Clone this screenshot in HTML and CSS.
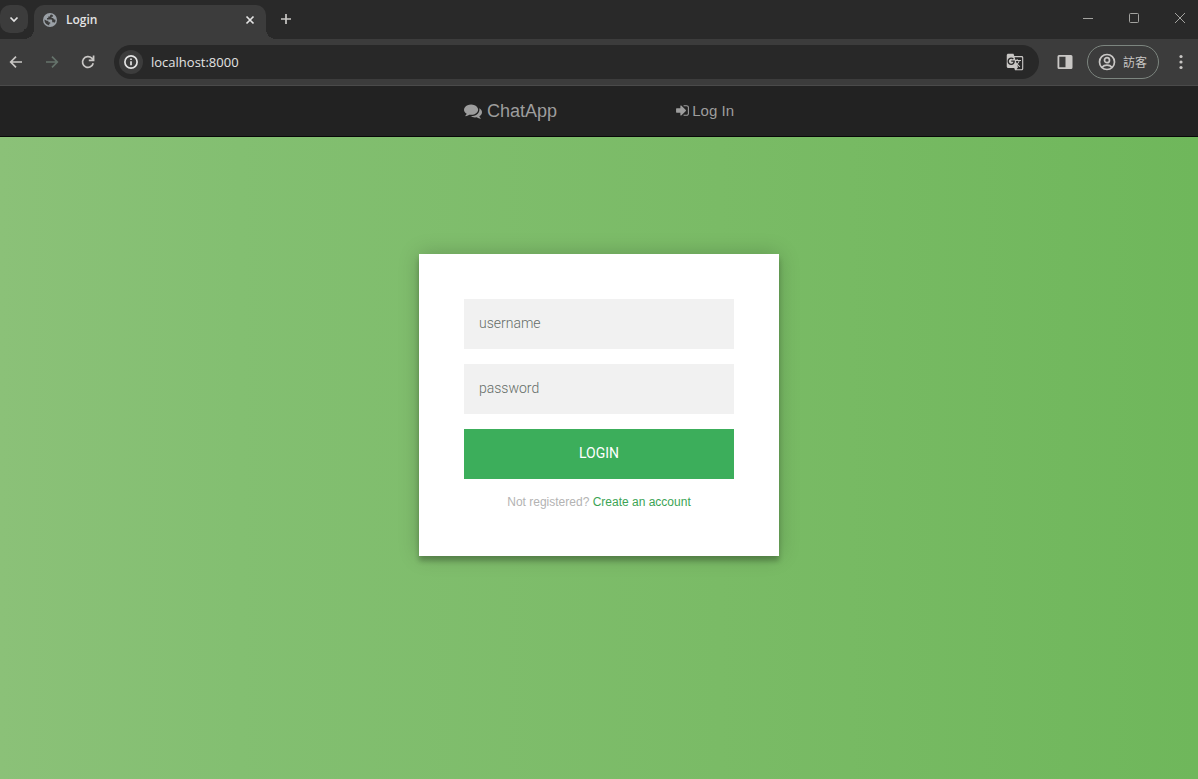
FILE: index.html
```html
<!DOCTYPE html>
<html lang="en">
<head>
<meta charset="utf-8">
<meta name="viewport" content="width=device-width, initial-scale=1">
<title>Login</title>
<link rel="stylesheet" href="styles.css">
</head>
<body>
<header class="browser">
  <div class="tabstrip">
    <button class="tab-search" aria-label="Search tabs"><svg width="12" height="12" viewBox="0 0 12 12"><path d="M2.500 4.500 6 8l3.500-3.500" class="line"/></svg></button>
    <div class="tab">
      <svg class="globe" width="14" height="14" viewBox="0 0 14 14"><circle cx="7" cy="7" r="7" fill="#9aa0a6"/><path d="M8.300 1.600C7.200 1.800 7 2.600 7 3.400H5.300v1.500H4v1.700h3.800c1 0 1.400.5 1.400 1.300v1.300h1.300c.6 0 1 .2 1.200.6.600-.9.900-1.900.8-3.100-1.400 0-2.200-.6-2.200-1.700H8.600V3.800h1.300V2.200zM1.500 6.600c-.2 2.800 1.600 5.300 4.700 5.800v-1.700h1V9.200H5.400V7.700H3.800z" fill="#3c3c3c"/></svg>
      <span class="tab-title">Login</span>
      <button class="tab-close" aria-label="Close tab"><svg width="10" height="10" viewBox="0 0 10 10"><path d="m1.500 1.500 7 7m0-7-7 7" class="line"/></svg></button>
    </div>
    <button class="new-tab" aria-label="New tab"><svg width="12" height="12" viewBox="0 0 12 12"><path d="M6 1v10M1 6h10" class="line"/></svg></button>
    <div class="window-buttons">
      <button aria-label="Minimize"><svg width="12" height="12" viewBox="0 0 12 12"><path d="M1 6.500h10" class="thin"/></svg></button>
      <button aria-label="Maximize"><svg width="12" height="12" viewBox="0 0 12 12"><rect x="1.500" y="1.500" width="9" height="9" rx="1" class="thin"/></svg></button>
      <button aria-label="Close"><svg width="12" height="12" viewBox="0 0 12 12"><path d="m1 1 10 10m0-10L1 11" class="thin"/></svg></button>
    </div>
  </div>
  <div class="toolbar">
    <button class="tool" aria-label="Back"><svg width="16" height="16" viewBox="0 0 16 16"><path d="M14 8H3m5-5.300L2.700 8 8 13.300" class="line"/></svg></button>
    <button class="tool dim" aria-label="Forward"><svg width="16" height="16" viewBox="0 0 16 16"><path d="M2 8h11M8 2.700 13.300 8 8 13.300" class="line"/></svg></button>
    <button class="tool" aria-label="Reload"><svg width="16" height="16" viewBox="0 0 16 16"><path d="M13.200 9.200A5.400 5.400 0 1 1 11.800 4.200L13.400 6M13.600 1.500v4.800H8.800" class="line"/></svg></button>
    <div class="address">
      <button class="site-info" aria-label="Site information"><svg width="14" height="14" viewBox="0 0 14 14"><circle cx="7" cy="7" r="6.100" class="line"/><path d="M7 6.300v4M7 3.500v1.500" class="line"/></svg></button>
      <input class="url" type="text" value="localhost:8000" aria-label="Address">
      <button class="translate" aria-label="Translate this page"><svg width="18" height="18" viewBox="0 0 24 24" fill="currentColor"><path d="M21 4H11l-1-3H3c-1.100 0-2 .9-2 2v15c0 1.100.9 2 2 2h8l1 3h9c1.100 0 2-.9 2-2V6c0-1.100-.9-2-2-2zM7 16c-2.760 0-5-2.240-5-5s2.240-5 5-5c1.350 0 2.480.5 3.350 1.300L9.030 8.570c-.38-.36-1.040-.78-2.030-.78-1.740 0-3.150 1.440-3.150 3.210S5.260 14.210 7 14.210c2.010 0 2.840-1.440 2.920-2.410H7v-1.710h4.680c.07.31.12.61.12 1.020C11.800 13.970 9.890 16 7 16zm6.170-5.420h3.700c-.43 1.250-1.110 2.430-2.050 3.470-.31-.35-.6-.72-.86-1.100zm8.330 9.920c0 .55-.45 1-1 1H14l2-2.500-1.040-3.100 3.100 3.100.92-.92-3.300-3.250.02-.02c1.130-1.250 1.930-2.690 2.400-4.220H20v-1.300h-4.530V8h-1.290v1.290h-1.440L11.460 5.500h9.040c.55 0 1 .45 1 1z"/></svg></button>
    </div>
    <button class="side-panel" aria-label="Side panel"><svg width="16" height="16" viewBox="0 0 16 16"><path fill="currentColor" fill-rule="evenodd" d="M2 1h12a1.500 1.500 0 0 1 1.500 1.500v11A1.500 1.500 0 0 1 14 15H2a1.500 1.500 0 0 1-1.500-1.500v-11A1.500 1.500 0 0 1 2 1zm.3 1.800v10.400h6.200V2.800z"/></svg></button>
    <button class="profile"><svg width="18" height="18" viewBox="0 0 18 18"><circle cx="9" cy="9" r="7.500" class="line"/><circle cx="9" cy="7.200" r="2.500" class="line"/><path d="M4 14.200c2.500-2.900 7.500-2.900 10 0" class="line"/></svg><span lang="zh-TW">訪客</span></button>
    <button class="menu" aria-label="Menu"><svg width="4" height="16" viewBox="0 0 4 16" fill="currentColor"><circle cx="2" cy="2.500" r="1.600"/><circle cx="2" cy="8" r="1.600"/><circle cx="2" cy="13.500" r="1.600"/></svg></button>
  </div>
</header>
<nav class="navbar">
  <div class="navbar-inner">
    <a class="brand" href="#"><svg width="18" height="18" viewBox="0 0 1792 1792" fill="currentColor"><path d="M1408 768q0 139-94 257t-256.500 186.500-353.500 68.500q-86 0-176-16-124 88-278 128-36 9-86 16h-3q-11 0-20.500-8t-11.500-21q-1-3-1-6.500t.5-6.500 2-6l2.500-5 3.500-5.500 4-5 4.500-5 4-4.500q5-6 23-25t26-29.500 22.500-29 25-38.500 20.500-44q-124-72-195-177t-71-224q0-139 94-257t256.500-186.500 353.500-68.500 353.500 68.500 256.500 186.500 94 257zm384 256q0 120-71 224.500t-195 176.500q10 24 20.500 44t25 38.500 22.500 29 26 29.500 23 25q1 1 4 4.500t4.500 5 4 5 3.500 5.500l2.500 5 2 6 .5 6.500-1 6.500q-3 14-13 22t-22 7q-50-7-86-16-154-40-278-128-90 16-176 16-271 0-472-132 58 4 88 4 161 0 309-45t264-129q125-92 192-212t67-254q0-77-23-152 129 71 204 178t75 230z"/></svg>ChatApp</a>
    <a class="nav-link" href="#"><svg width="15" height="15" viewBox="0 0 1792 1792" fill="currentColor"><path d="M1312 896q0 26-19 45l-544 544q-19 19-45 19t-45-19-19-45v-288h-448q-26 0-45-19t-19-45v-384q0-26 19-45t45-19h448v-288q0-26 19-45t45-19 45 19l544 544q19 19 19 45zm352-352v704q0 119-84.500 203.500t-203.500 84.500h-320q-13 0-22.500-9.500t-9.500-22.500q0-4-1-20t-.5-26.500 3-23.500 10-19.500 20.500-6.500h320q66 0 113-47t47-113v-704q0-66-47-113t-113-47h-312l-11.500-1-11.500-3-8-5.500-7-9-2-13.500q0-4-1-20t-.5-26.500 3-23.500 10-19.500 20.500-6.500h320q119 0 203.500 84.500t84.500 203.500z"/></svg>Log In</a>
  </div>
</nav>
<main class="login-page">
  <form class="card">
    <input class="field" type="text" name="username" placeholder="username" aria-label="username">
    <input class="field" type="password" name="password" placeholder="password" aria-label="password">
    <button class="submit" type="button">Login</button>
    <p class="message">Not registered? <a href="#">Create an account</a></p>
  </form>
</main>
</body>
</html>
```

FILE: styles.css
```css
* { box-sizing: border-box; }
body {
  margin: 0;
  min-height: 100vh;
  display: flex;
  flex-direction: column;
  font-family: "Liberation Sans", Arial, sans-serif;
}
button { border: 0; padding: 0; background: none; color: inherit; font: inherit; }
svg { display: block; flex: none; }
.line { fill: none; stroke: currentColor; stroke-width: 1.7; }
.thin { fill: none; stroke: currentColor; stroke-width: 1; }

.browser {
  color: #c9c7c5;
  background: #3c3c3c;
  border-bottom: 1px solid #4a4a4a;
  font-family: "Open Sans", "Noto Sans", "Noto Sans CJK TC", sans-serif;
}
.browser button { display: flex; align-items: center; justify-content: center; }
.tabstrip { display: flex; height: 39px; background: #292929; }
.tab-search { width: 28px; height: 28px; margin-top: 5px; border-radius: 10px; background: #3c3c3c; color: #e3e3e3; }
.tab {
  position: relative;
  display: flex;
  align-items: center;
  width: 232px;
  margin: 5px 0 0 6px;
  padding: 0 10px 5px 9px;
  border-radius: 10px 10px 0 0;
  background: #3c3c3c;
}
.tab::before, .tab::after {
  content: "";
  position: absolute;
  bottom: 0;
  width: 10px;
  height: 10px;
}
.tab::before { right: 100%; background: radial-gradient(circle at 0 0, #292929 10px, #3c3c3c 10px); }
.tab::after { left: 100%; background: radial-gradient(circle at 100% 0, #292929 10px, #3c3c3c 10px); }
.tab-title { flex: 1; margin-left: 9px; color: #e3e3e3; font-size: 12px; font-weight: 600; }
.tab-close { width: 12px; height: 16px; color: #e3e3e3; }
.new-tab { width: 28px; height: 28px; margin: 5px 0 0 6px; }
.window-buttons { display: flex; height: 36px; margin-left: auto; margin-right: -5px; color: #a3a3a0; }
.window-buttons button { width: 46px; }

.toolbar { display: flex; align-items: center; height: 46px; }
.tool { width: 32px; height: 32px; margin-right: 4px; }
.dim { color: #65736b; }
.address {
  flex: 1;
  display: flex;
  align-items: center;
  height: 34px;
  margin-left: 6px;
  padding: 0 15px 0 5px;
  border-radius: 17px;
  background: #282828;
}
.site-info { width: 24px; height: 24px; border-radius: 50%; background: #3c3c3c; color: #e3e3e3; }
.url {
  flex: 1;
  min-width: 0;
  margin-left: 8px;
  padding: 0;
  border: 0;
  outline: 0;
  background: none;
  color: #e3e3e3;
  font: 13px/20px "Open Sans", "Noto Sans", sans-serif;
}
.side-panel { margin-left: 18px; }
.profile {
  gap: 7px;
  height: 34px;
  margin-left: 14px;
}
.browser .profile { padding: 0 11px 0 10px; border: 1px solid #7c857f; border-radius: 17px; font-size: 12px; }
.menu { width: 16px; height: 32px; margin: 0 9px 0 14px; }

.navbar { border-bottom: 1px solid #080808; background: #222; }
.navbar-inner {
  display: flex;
  align-items: center;
  justify-content: space-between;
  width: 270px;
  height: 50px;
  margin: 0 auto;
}
.brand, .nav-link { display: flex; align-items: center; color: #9d9d9d; text-decoration: none; }
.brand { gap: 5px; font-size: 18px; }
.nav-link { gap: 2px; padding-bottom: 2px; font-size: 15px; }

.login-page {
  flex: 1;
  padding: 117px 16px 0;
  background: linear-gradient(to right, #8bc178, #83bf71 20%, #7abb66 60%, #6fb75b);
}
.card {
  max-width: 360px;
  margin: 0 auto;
  padding: 45px;
  background: #fff;
  box-shadow: 0 0 20px rgba(0, 0, 0, 0.2), 0 5px 5px rgba(0, 0, 0, 0.24);
}
.field, .submit {
  display: block;
  width: 100%;
  height: 50px;
  margin-bottom: 15px;
  padding: 0 15px 2px;
  border: 0;
  font-family: Roboto, sans-serif;
  font-size: 14px;
}
.field { background: #f1f1f1; color: #333; font-weight: 300; }
.field::placeholder { color: #656d68; opacity: 1; }
.submit { background: #3cae5b; color: #fff; text-transform: uppercase; }
.message { margin: 0; color: #b3b3b3; font-size: 12px; line-height: 17px; text-align: center; }
.message a { color: #3ca455; text-decoration: none; }
```
